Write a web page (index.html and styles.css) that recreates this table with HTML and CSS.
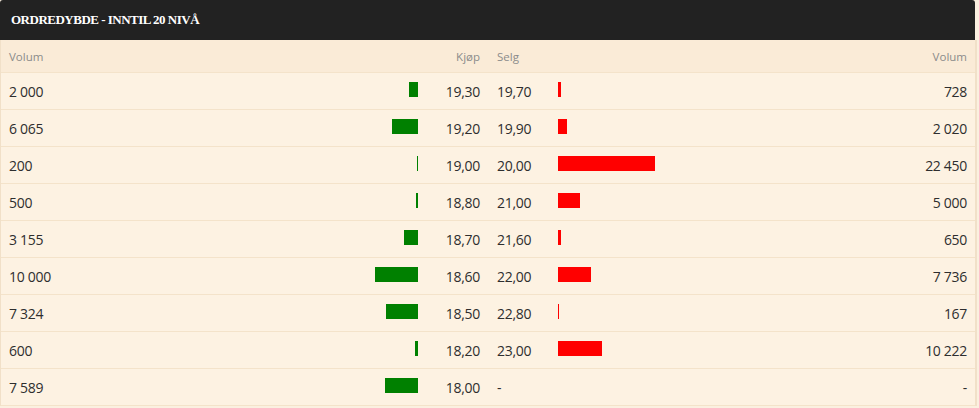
FILE: index.html
```html
<!DOCTYPE html>
<html lang="no">
<head>
<meta charset="utf-8">
<title>Ordredybde</title>
<link rel="stylesheet" href="styles.css">
</head>
<body>
<div class="card">
  <div class="title">ORDREDYBDE - INNTIL 20 NIVÅ</div>
  <div class="book">
    <div class="row head">
      <div class="c vol-l">Volum</div>
      <div class="c bar-l"></div>
      <div class="c bid">Kjøp</div>
      <div class="c ask">Selg</div>
      <div class="c bar-r"></div>
      <div class="c vol-r">Volum</div>
    </div>
    <div class="row">
      <div class="c vol-l">2 000</div>
      <div class="c bar-l"><span class="bar buy" style="width:9px"></span></div>
      <div class="c bid">19,30</div>
      <div class="c ask">19,70</div>
      <div class="c bar-r"><span class="bar sell" style="width:3px"></span></div>
      <div class="c vol-r">728</div>
    </div>
    <div class="row">
      <div class="c vol-l">6 065</div>
      <div class="c bar-l"><span class="bar buy" style="width:26px"></span></div>
      <div class="c bid">19,20</div>
      <div class="c ask">19,90</div>
      <div class="c bar-r"><span class="bar sell" style="width:9px"></span></div>
      <div class="c vol-r">2 020</div>
    </div>
    <div class="row">
      <div class="c vol-l">200</div>
      <div class="c bar-l"><span class="bar buy" style="width:1px"></span></div>
      <div class="c bid">19,00</div>
      <div class="c ask">20,00</div>
      <div class="c bar-r"><span class="bar sell" style="width:97px"></span></div>
      <div class="c vol-r">22 450</div>
    </div>
    <div class="row">
      <div class="c vol-l">500</div>
      <div class="c bar-l"><span class="bar buy" style="width:2px"></span></div>
      <div class="c bid">18,80</div>
      <div class="c ask">21,00</div>
      <div class="c bar-r"><span class="bar sell" style="width:22px"></span></div>
      <div class="c vol-r">5 000</div>
    </div>
    <div class="row">
      <div class="c vol-l">3 155</div>
      <div class="c bar-l"><span class="bar buy" style="width:14px"></span></div>
      <div class="c bid">18,70</div>
      <div class="c ask">21,60</div>
      <div class="c bar-r"><span class="bar sell" style="width:3px"></span></div>
      <div class="c vol-r">650</div>
    </div>
    <div class="row">
      <div class="c vol-l">10 000</div>
      <div class="c bar-l"><span class="bar buy" style="width:43px"></span></div>
      <div class="c bid">18,60</div>
      <div class="c ask">22,00</div>
      <div class="c bar-r"><span class="bar sell" style="width:33px"></span></div>
      <div class="c vol-r">7 736</div>
    </div>
    <div class="row">
      <div class="c vol-l">7 324</div>
      <div class="c bar-l"><span class="bar buy" style="width:32px"></span></div>
      <div class="c bid">18,50</div>
      <div class="c ask">22,80</div>
      <div class="c bar-r"><span class="bar sell" style="width:1px"></span></div>
      <div class="c vol-r">167</div>
    </div>
    <div class="row">
      <div class="c vol-l">600</div>
      <div class="c bar-l"><span class="bar buy" style="width:3px"></span></div>
      <div class="c bid">18,20</div>
      <div class="c ask">23,00</div>
      <div class="c bar-r"><span class="bar sell" style="width:44px"></span></div>
      <div class="c vol-r">10 222</div>
    </div>
    <div class="row">
      <div class="c vol-l">7 589</div>
      <div class="c bar-l"><span class="bar buy" style="width:33px"></span></div>
      <div class="c bid">18,00</div>
      <div class="c ask">-</div>
      <div class="c bar-r"></div>
      <div class="c vol-r">-</div>
    </div>
  </div>
</div>
</body>
</html>
```
FILE: styles.css
```css
html, body {
  margin: 0;
  padding: 0;
}
body {
  background: #fbf0e0;
  font-family: "Open Sans", "Noto Sans", sans-serif;
  color: #2e2e2e;
}
.card {
  width: 977px;
}
.title {
  width: 975px;
  height: 40px;
  box-sizing: border-box;
  background: #222222;
  color: #ffffff;
  border-radius: 3px 3px 0 0;
  font-family: "Liberation Serif", "Times New Roman", serif;
  font-weight: bold;
  font-size: 13px;
  letter-spacing: -0.5px;
  padding-left: 11px;
  display: flex;
  align-items: center;
}
.book {
  border-left: 1px solid #f1e0c8;
  border-right: 2px solid #f1e0c8;
  background: #fdf2e2;
}
.row {
  display: grid;
  grid-template-columns: 309px 108px 70px 70px 110px 307px;
  height: 37px;
  box-sizing: border-box;
  border-bottom: 1px solid #f4e3ca;
  align-items: center;
  font-size: 14px;
  letter-spacing: -0.3px;
}
.row.head {
  height: 33px;
  background: #faebd7;
  color: #8b8b8b;
  font-size: 11.5px;
  letter-spacing: 0;
}
.c {
  white-space: nowrap;
}
.vol-l {
  padding-left: 8px;
}
.bar-l {
  text-align: right;
}
.bid {
  text-align: right;
  padding-right: 8px;
}
.ask {
  padding-left: 9px;
}
.bar-r {
  text-align: left;
}
.vol-r {
  text-align: right;
  padding-right: 8px;
}
.bar {
  display: inline-block;
  height: 15px;
  vertical-align: baseline;
}
.bar.buy {
  background: #008000;
}
.bar.sell {
  background: #ff0000;
}
```
